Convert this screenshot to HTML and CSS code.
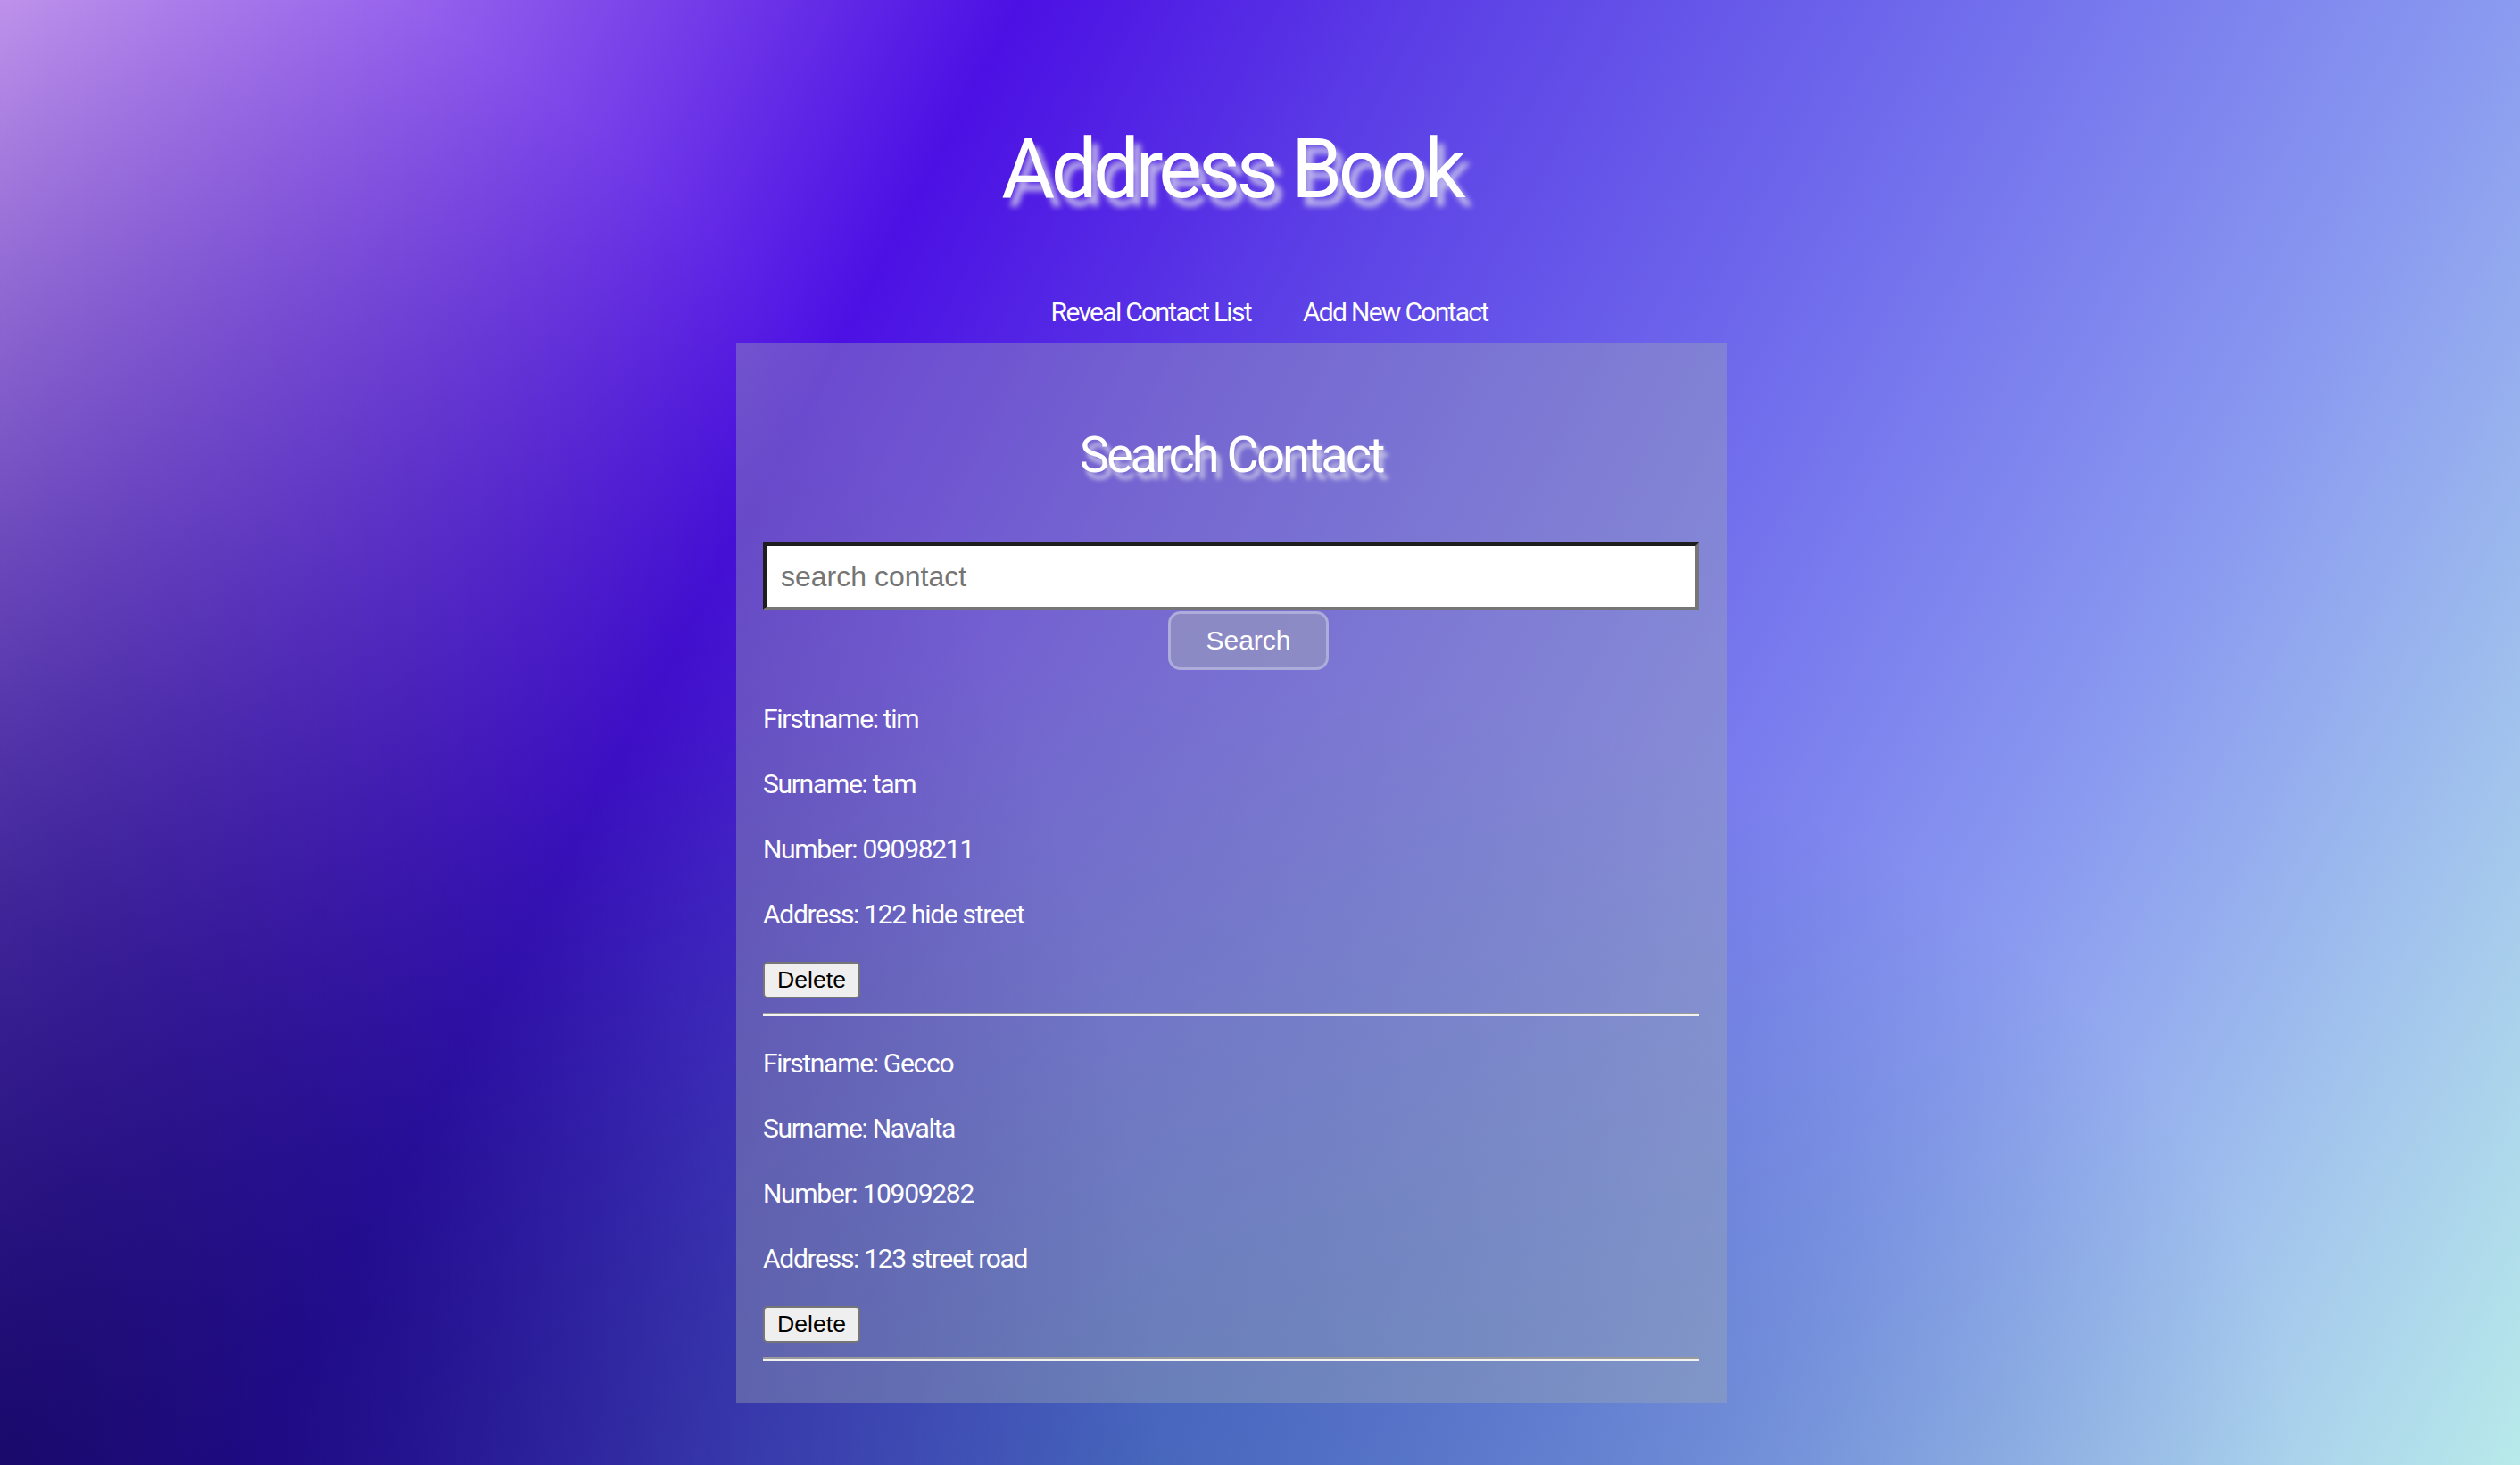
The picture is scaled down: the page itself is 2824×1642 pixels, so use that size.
FILE: index.html
```html
<!DOCTYPE html>
<html lang="en">
<head>
<meta charset="utf-8">
<title>Address Book</title>
<link rel="stylesheet" href="styles.css">
</head>
<body>
<div class="page">
  <h1 class="title">Address Book</h1>
  <nav class="nav">
    <a class="nav-link" href="#">Reveal Contact List</a>
    <a class="nav-link" href="#">Add New Contact</a>
  </nav>
  <section class="panel">
    <h2 class="panel-title">Search Contact</h2>
    <form class="search">
      <input class="search-input" type="text" placeholder="search contact">
      <button class="search-btn" type="button">Search</button>
    </form>
    <div class="contacts">
      <div class="contact">
        <p class="field">Firstname: tim</p>
        <p class="field">Surname: tam</p>
        <p class="field">Number: 09098211</p>
        <p class="field">Address: 122 hide street</p>
        <button class="delete-btn" type="button">Delete</button>
        <hr class="divider">
      </div>
      <div class="contact">
        <p class="field">Firstname: Gecco</p>
        <p class="field">Surname: Navalta</p>
        <p class="field">Number: 10909282</p>
        <p class="field">Address: 123 street road</p>
        <button class="delete-btn" type="button">Delete</button>
        <hr class="divider">
      </div>
    </div>
  </section>
</div>
</body>
</html>
```

FILE: styles.css
```css
* { box-sizing: border-box; }

html, body {
  margin: 0;
  padding: 0;
}

body {
  min-height: 100vh;
  color: #fff;
  font-family: Roboto, "Liberation Sans", sans-serif;
  background:
    radial-gradient(ellipse 1300px 1750px at 0% 100%,
      rgba(14, 4, 90, 0.88) 0%,
      rgba(14, 4, 100, 0.62) 35%,
      rgba(20, 10, 110, 0.32) 65%,
      rgba(20, 10, 110, 0) 100%),
    radial-gradient(ellipse 1300px 900px at 45% 100%,
      rgba(30, 100, 140, 0.5) 0%,
      rgba(30, 100, 140, 0.25) 50%,
      rgba(30, 100, 140, 0) 100%),
    linear-gradient(118deg,
      #c89af2 0%,
      #4c10e4 31%,
      #5c40e6 44%,
      #6e68ec 58%,
      #8a9af0 76%,
      #b8eaea 100%);
}

.page {
  display: flex;
  flex-direction: column;
  align-items: center;
  padding-right: 64px;
}

.title {
  margin: 130px 0 0;
  font-size: 92px;
  line-height: 120px;
  font-weight: 400;
  letter-spacing: -4.5px;
  text-shadow: 8px 10px 6px rgba(222, 222, 238, 0.75);
}

.nav {
  display: flex;
  gap: 58px;
  margin-top: 80px;
  padding-left: 85px;
  font-size: 30px;
  line-height: 40px;
  letter-spacing: -1.7px;
}

.nav-link {
  color: #fff;
  text-decoration: none;
}

.panel {
  width: 1110px;
  margin-top: 14px;
  padding: 91px 31px 14px 30px;
  background: rgba(160, 172, 176, 0.38);
}

.panel-title {
  margin: 0;
  text-align: center;
  font-size: 56px;
  line-height: 70px;
  font-weight: 400;
  letter-spacing: -3px;
  text-shadow: 5px 8px 5px rgba(222, 222, 238, 0.75);
}

.search {
  display: flex;
  flex-direction: column;
  align-items: center;
  margin: 63px 0 0;
}

.search-input {
  display: block;
  width: 100%;
  height: 76px;
  padding: 0 16px;
  border: 4px solid;
  border-color: #1e1e1e #767676 #767676 #1e1e1e;
  background: #fff;
  font-family: "Liberation Sans", Arial, sans-serif;
  font-size: 32px;
  color: #000;
}

.search-input::placeholder {
  color: #757575;
}

.search-btn {
  width: 180px;
  height: 66px;
  margin: 1px 0 0 39px;
  border: 3px solid rgba(200, 200, 235, 0.55);
  border-radius: 14px;
  background: rgba(145, 145, 194, 0.8);
  color: #fff;
  font-family: "Liberation Sans", Arial, sans-serif;
  font-size: 30px;
}

.contacts {
  margin-top: 35px;
}

.field {
  margin: 0 0 33px;
  font-size: 30px;
  line-height: 40px;
  letter-spacing: -1.3px;
}

.delete-btn {
  display: block;
  height: 41px;
  padding: 0 14px;
  border: 2px solid #767676;
  border-radius: 5px;
  background: #efefef;
  color: #000;
  font-family: "Liberation Sans", Arial, sans-serif;
  font-size: 26.67px;
  line-height: 1;
}

.divider {
  height: 0;
  margin: 16px 0 33px;
  border: 0;
  border-top: 2px solid #9a9a9a;
  border-bottom: 2px solid #f2f2f2;
}
```
